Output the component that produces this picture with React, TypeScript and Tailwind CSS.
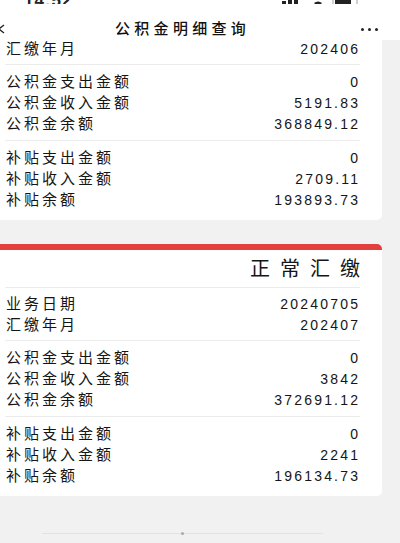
import React from "react";

type Row = [string, string];

const FONT = { fontFamily: '"Liberation Sans", "Noto Sans CJK SC", sans-serif' };

function Section({ rows, last, first }: { rows: Row[]; last?: boolean; first?: boolean }) {
  return (
    <div
      className={
        (first ? "pt-[5px] pb-[5px] " : last ? "pt-[6px] pb-[10px] " : "pt-[6px] pb-[6px] ") +
        (last ? "" : "border-b border-[#ececec]")
      }
    >
      {rows.map(([k, v]) => (
        <div key={k} className="h-[21px] flex items-center justify-between pl-[1px] pr-[2px]">
          <span className="text-[15px] tracking-[3px] text-[#151515] leading-none">{k}</span>
          <span className="text-[14px] tracking-[2.2px] -mr-[2.2px] text-[#151515] leading-none">{v}</span>
        </div>
      ))}
    </div>
  );
}

function Card({ data }: { data: { date: string; month: string; a: string[]; b: string[] } }) {
  return (
    <div className="-ml-[6px] w-[388px] bg-white rounded-[5px] overflow-hidden">
      <div className="h-[6px] bg-[#e2403f]" />
      <div className="pl-[11px] pr-[22px]">
        <div className="h-[38px] flex items-center justify-end border-b border-[#ececec]">
          <span className="text-[20px] tracking-[10px] -mr-[10px] text-[#151515] leading-none">正常汇缴</span>
        </div>
        <Section
          first
          rows={[
            ["业务日期", data.date],
            ["汇缴年月", data.month],
          ]}
        />
        <Section
          rows={[
            ["公积金支出金额", data.a[0]],
            ["公积金收入金额", data.a[1]],
            ["公积金余额", data.a[2]],
          ]}
        />
        <Section
          last
          rows={[
            ["补贴支出金额", data.b[0]],
            ["补贴收入金额", data.b[1]],
            ["补贴余额", data.b[2]],
          ]}
        />
      </div>
    </div>
  );
}

export default function App() {
  const cards = [
    { date: "20240605", month: "202406", a: ["0", "5191.83", "368849.12"], b: ["0", "2709.11", "193893.73"] },
    { date: "20240705", month: "202407", a: ["0", "3842", "372691.12"], b: ["0", "2241", "196134.73"] },
  ];
  return (
    <div className="w-[400px] h-[543px] bg-[#f1f1f1] overflow-hidden flex flex-col" style={FONT}>
      <header className="bg-white shrink-0 relative z-10">
        <div className="h-[4px] overflow-hidden flex items-end">
          <span className="ml-[24px] -mb-[5px] text-[17px] font-bold leading-none text-[#222] tracking-[1px]">14:52</span>
          <svg className="ml-auto mr-[38px] -mb-[4px]" width="86" height="14" viewBox="0 0 86 14">
            <rect x="0" y="10" width="4" height="4" fill="#222" />
            <rect x="6" y="7" width="4" height="7" fill="#222" />
            <rect x="12" y="4" width="4" height="10" fill="#222" />
            <rect x="18" y="1" width="4" height="13" fill="#222" />
            <path d="M42 13 L38 9 A6 6 0 0 1 46 9 Z" fill="#222" />
            <rect x="57" y="1" width="24" height="12" rx="3" fill="none" stroke="#bbb" strokeWidth="1.4" />
            <rect x="59" y="3" width="16" height="8" rx="1.5" fill="#222" />
          </svg>
        </div>
        <div className="h-[36px] flex items-end pb-[4px]">
          <svg className="-ml-[4px] mb-[2px]" width="10" height="10" viewBox="0 0 10 10">
            <polyline points="8,1 3,5 8,9" fill="none" stroke="#222" strokeWidth="1.3" />
          </svg>
          <span className="ml-[109px] text-[15px] font-medium tracking-[4.3px] text-[#111] leading-[14px]">公积金明细查询</span>
          <div className="ml-auto mr-[22px] mb-[5px] flex gap-[4px]">
            <span className="w-[3px] h-[3px] rounded-full bg-[#222]" />
            <span className="w-[3px] h-[3px] rounded-full bg-[#222]" />
            <span className="w-[3px] h-[3px] rounded-full bg-[#222]" />
          </div>
        </div>
      </header>
      <main className="flex-1 overflow-hidden">
        <div className="-mt-[72px] flex flex-col gap-[24px]">
          {cards.map((c) => (
            <Card key={c.month} data={c} />
          ))}
        </div>
        <div className="mt-[36px] ml-[42px] w-[281px] flex items-center">
          <div className="flex-1 h-px bg-[#e2e2e2]" />
          <span className="w-[3px] h-[3px] rounded-full bg-[#a8a8a8]" />
          <div className="flex-1 h-px bg-[#e2e2e2]" />
        </div>
      </main>
    </div>
  );
}
